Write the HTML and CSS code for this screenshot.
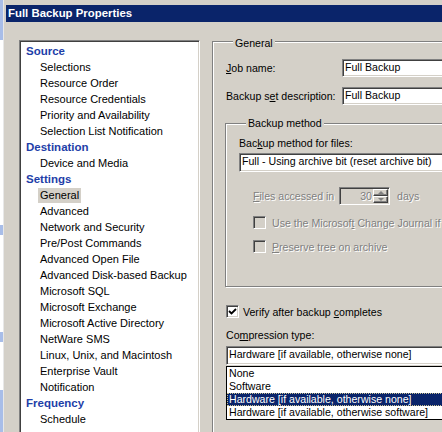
FILE: index.html
```html
<!DOCTYPE html>
<html lang="en">
<head>
  <meta charset="UTF-8">
  <title>Full Backup Properties</title>
  <link rel="stylesheet" href="styles.css">
</head>
<body>
  <div class="screen">
    <div class="behind">
      <div class="patch blue tall"></div>
      <div class="patch white s1"></div>
      <div class="patch blue s2"></div>
      <div class="patch white s3"></div>
      <div class="patch blue s2"></div>
      <div class="patch white s4"></div>
      <div class="patch blue rest"></div>
    </div>
    <div class="dialog">
      <div class="titlebar">Full Backup Properties</div>
      <div class="content">
        <ul class="tree">
          <li class="head">Source</li>
          <li class="item"><span>Selections</span></li>
          <li class="item"><span>Resource Order</span></li>
          <li class="item"><span>Resource Credentials</span></li>
          <li class="item"><span>Priority and Availability</span></li>
          <li class="item"><span>Selection List Notification</span></li>
          <li class="head">Destination</li>
          <li class="item"><span>Device and Media</span></li>
          <li class="head">Settings</li>
          <li class="item selected"><span>General</span></li>
          <li class="item"><span>Advanced</span></li>
          <li class="item"><span>Network and Security</span></li>
          <li class="item"><span>Pre/Post Commands</span></li>
          <li class="item"><span>Advanced Open File</span></li>
          <li class="item"><span>Advanced Disk-based Backup</span></li>
          <li class="item"><span>Microsoft SQL</span></li>
          <li class="item"><span>Microsoft Exchange</span></li>
          <li class="item"><span>Microsoft Active Directory</span></li>
          <li class="item"><span>NetWare SMS</span></li>
          <li class="item"><span>Linux, Unix, and Macintosh</span></li>
          <li class="item"><span>Enterprise Vault</span></li>
          <li class="item"><span>Notification</span></li>
          <li class="head">Frequency</li>
          <li class="item"><span>Schedule</span></li>
        </ul>

        <div class="pane">
          <div class="group general">
            <div class="group-label">General</div>

            <div class="row first">
              <div class="row-label"><u>J</u>ob name:</div>
              <div class="field wide">Full Backup</div>
            </div>
            <div class="row second">
              <div class="row-label">Backup s<u>e</u>t description:</div>
              <div class="field wide">Full Backup</div>
            </div>

            <div class="group method">
              <div class="group-label shifted">Backup method</div>
              <div class="plain-label">Bac<u>k</u>up method for files:</div>
              <div class="field combo method-combo">Full - Using archive bit (reset archive bit)</div>

              <div class="spin-row disabled">
                <span class="spin-label"><u>F</u>iles accessed in</span>
                <div class="spin">
                  <div class="spin-value">30</div>
                  <div class="spin-buttons">
                    <div class="spin-btn"><span class="arrow up"></span></div>
                    <div class="spin-btn"><span class="arrow down"></span></div>
                  </div>
                </div>
                <span class="spin-unit">days</span>
              </div>

              <div class="check-row disabled c1">
                <span class="check off"></span>
                <span>Use the Microsof<u>t</u> Change Journal if</span>
              </div>
              <div class="check-row disabled c2">
                <span class="check off"></span>
                <span><u>P</u>reserve tree on archive</span>
              </div>
            </div>

            <div class="check-row verify">
              <span class="check on">
                <svg width="9" height="9" viewBox="0 0 9 9"><path d="M1 4 L3.5 6.5 L8 2" fill="none" stroke="#000" stroke-width="1.8"/></svg>
              </span>
              <span>Verify after backup <u>c</u>ompletes</span>
            </div>

            <div class="plain-label compress">Co<u>m</u>pression type:</div>
            <div class="field combo compress-combo">Hardware [if available, otherwise none]</div>
            <ul class="droplist">
              <li>None</li>
              <li>Software</li>
              <li class="current">Hardware [if available, otherwise none]</li>
              <li>Hardware [if available, otherwise software]</li>
            </ul>
          </div>
        </div>
      </div>
    </div>
  </div>
</body>
</html>
```

FILE: styles.css
```css
body {
  margin: 0;
  width: 442px;
  height: 432px;
  overflow: hidden;
  font-family: "Liberation Sans", Arial, sans-serif;
  font-size: 11px;
  color: #000;
  background: #d4d0c8;
}

.screen {
  display: flex;
  width: 442px;
  height: 432px;
  overflow: hidden;
}

/* window peeking out behind the dialog */
.behind {
  width: 3px;
  flex: none;
  display: flex;
  flex-direction: column;
  background: #fff;
  border-right: 1px solid #e8e8e8;
}

.patch { width: 3px; }
.patch.blue { background: #a8bde8; }
.patch.white { background: #fff; }
.patch.tall { height: 40px; }
.patch.s1 { height: 185px; }
.patch.s2 { height: 10px; }
.patch.s3 { height: 97px; }
.patch.s4 { height: 48px; }
.patch.rest { flex: 1; }

.dialog {
  flex: 1;
  padding: 5px 0 0 2px;
  background: #d4d0c8;
  overflow: hidden;
}

.titlebar {
  height: 17px;
  line-height: 17px;
  padding-left: 2px;
  background: #0a246a;
  color: #fff;
  font-size: 11.4px;
  font-weight: bold;
  white-space: nowrap;
}

.content {
  display: flex;
  padding-left: 13px;
}

/* left tree */
.tree {
  list-style: none;
  margin: 18px 0 0;
  padding: 0;
  width: 181px;
  height: 420px;
  box-sizing: border-box;
  flex: none;
  background: #fff;
  border: 1px solid;
  border-color: #808080 #fff #fff #808080;
  box-shadow: inset 1px 1px #404040, inset -1px -1px #d4d0c8;
  padding-top: 2px;
}

.tree li {
  height: 16px;
  line-height: 16px;
  white-space: nowrap;
}

.tree .head {
  padding-left: 6px;
  font-size: 11.5px;
  font-weight: bold;
  color: #1e3ea8;
}

.tree .item {
  padding-left: 18px;
}

.tree .item span {
  display: inline-block;
  padding: 0 2px;
  line-height: 15px;
  margin-top: 1px;
  vertical-align: top;
}

.tree .selected span {
  background: #d4d0c8;
}

/* right pane */
.pane {
  flex: none;
  width: 300px;
  margin-left: 12px;
  padding-top: 19px;
  font-size: 10.6px;
}

.group {
  border: 1px solid #808080;
  box-shadow: inset 1px 1px #fff, 1px 1px #fff;
}

.group-label {
  width: max-content;
  margin: -5px 0 0 7px;
  padding: 0 2px;
  line-height: 13px;
  background: #d4d0c8;
}

.group-label.shifted {
  margin-top: -7px;
}

.general {
  padding: 0 0 40px 13px;
}

.row {
  display: flex;
  align-items: center;
  height: 18px;
}

.row.first { margin-top: 9px; }
.row.second { margin-top: 10px; }

.row-label {
  width: 116px;
  flex: none;
  white-space: nowrap;
}

.field {
  box-sizing: border-box;
  height: 18px;
  line-height: 14px;
  padding-left: 2px;
  background: #fff;
  border: 1px solid;
  border-color: #808080 #fff #fff #808080;
  box-shadow: inset 1px 1px #404040, inset -1px -1px #d4d0c8;
  white-space: nowrap;
  overflow: hidden;
}

.field.wide { width: 120px; flex: none; }

.method {
  margin: 18px 0 0 -1px;
  padding: 0 0 33px 13px;
}

.plain-label {
  line-height: 13px;
  margin-top: 7px;
  white-space: nowrap;
}

.combo {
  height: 19px;
  line-height: 15px;
  padding-left: 2px;
}

.method-combo {
  margin-top: 3px;
  width: 240px;
}

.disabled {
  color: #808080;
  text-shadow: 1px 1px #fff;
}

.spin-row {
  display: flex;
  align-items: center;
  height: 18px;
  margin: 15px 0 0 14px;
  white-space: nowrap;
}

.spin-label { width: 86px; }

.spin {
  display: flex;
  width: 51px;
  height: 18px;
  box-sizing: border-box;
  border: 1px solid;
  border-color: #808080 #fff #fff #808080;
  box-shadow: inset 1px 1px #404040, inset -1px -1px #d4d0c8;
  padding: 2px 1px 1px 2px;
}

.spin-value {
  flex: 1;
  text-align: right;
  line-height: 13px;
  padding-right: 1px;
}

.spin-buttons {
  width: 15px;
  display: flex;
  flex-direction: column;
  margin-top: -1px;
}

.spin-btn {
  flex: 1;
  box-sizing: border-box;
  border: 1px solid;
  border-color: #fff #404040 #404040 #fff;
  box-shadow: inset -1px -1px #808080;
  display: flex;
  align-items: center;
  justify-content: center;
}

.arrow {
  width: 0;
  height: 0;
  border-left: 3px solid transparent;
  border-right: 3px solid transparent;
}

.arrow.up { border-bottom: 3px solid #808080; }
.arrow.down { border-top: 3px solid #808080; }

.spin-unit { margin-left: 7px; }

.check-row {
  display: flex;
  align-items: center;
  gap: 6px;
  height: 13px;
  white-space: nowrap;
}

.check {
  width: 13px;
  height: 13px;
  flex: none;
  box-sizing: border-box;
  border: 1px solid;
  border-color: #808080 #fff #fff #808080;
  box-shadow: inset 1px 1px #404040, inset -1px -1px #d4d0c8;
  display: flex;
  align-items: center;
  justify-content: center;
}

.check.off { background: #d4d0c8; }
.check.on { background: #fff; }

.c1 { margin: 11px 0 0 14px; }
.c2 { margin: 11px 0 0 14px; }

.verify {
  margin-top: 18px;
  gap: 4px;
}

.compress {
  margin-top: 11px;
}

.compress-combo {
  margin-top: 4px;
  width: 240px;
}

.droplist {
  list-style: none;
  margin: 1px 0 0;
  padding: 0;
  width: 240px;
  border: 1px solid #000;
  background: #fff;
}

.droplist li {
  height: 13px;
  line-height: 13px;
  padding-left: 2px;
  white-space: nowrap;
}

.droplist .current {
  background: #0a246a;
  color: #fff;
  outline: 1px dotted #c8c090;
  outline-offset: -1px;
}
```
